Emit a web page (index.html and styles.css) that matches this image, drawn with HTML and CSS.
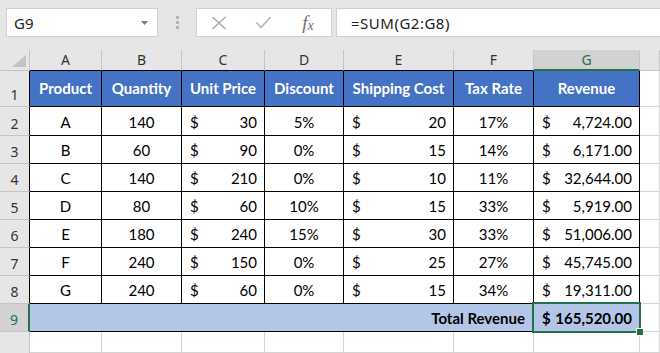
FILE: index.html
```html
<!DOCTYPE html>
<html>
<head>
<meta charset="utf-8">
<link rel="stylesheet" href="styles.css">
</head>
<body>
<div class="toolbar">
  <div class="namebox"><span>G9</span><svg class="dd" width="7" height="4" viewBox="0 0 7 4"><path d="M0 0H7L3.5 4Z" fill="#7a7a7a"/></svg></div>
  <div class="grip"><i></i><i></i><i></i></div>
  <div class="fxbox">
    <span class="btn"><svg width="16" height="14" viewBox="0 0 16 14"><path d="M1.5 1 L14.5 13 M14.5 1 L1.5 13" stroke="#a8a8a8" stroke-width="1.4" fill="none"/></svg></span>
    <span class="btn"><svg width="17" height="13" viewBox="0 0 17 13"><path d="M1.5 6.5 L6 11.5 L15.5 1" stroke="#b8b8b8" stroke-width="1.8" fill="none"/></svg></span>
    <span class="btn fx">f<span class="fxx">x</span></span>
  </div>
  <div class="formula">=SUM(G2:G8)</div>
</div>
<div class="sheet">
  <div class="corner"><svg width="14" height="12" viewBox="0 0 14 12"><path d="M14 0V12H0Z" fill="#c3c3c3"/></svg></div>
  <div class="ch">A</div><div class="ch">B</div><div class="ch">C</div><div class="ch">D</div><div class="ch">E</div><div class="ch">F</div><div class="ch sel">G</div><div class="ch ext"></div>

  <div class="rh">1</div>
  <div class="c hd">Product</div><div class="c hd">Quantity</div><div class="c hd">Unit Price</div><div class="c hd">Discount</div><div class="c hd">Shipping Cost</div><div class="c hd">Tax Rate</div><div class="c hd">Revenue</div><div class="g"></div>

  <div class="rh">2</div>
  <div class="c ctr">A</div><div class="c ctr">140</div><div class="c cur"><span>$</span><span>30</span></div><div class="c ctr">5%</div><div class="c cur"><span>$</span><span>20</span></div><div class="c ctr">17%</div><div class="c cur"><span>$</span><span>4,724.00</span></div><div class="g"></div>

  <div class="rh">3</div>
  <div class="c ctr">B</div><div class="c ctr">60</div><div class="c cur"><span>$</span><span>90</span></div><div class="c ctr">0%</div><div class="c cur"><span>$</span><span>15</span></div><div class="c ctr">14%</div><div class="c cur"><span>$</span><span>6,171.00</span></div><div class="g"></div>

  <div class="rh">4</div>
  <div class="c ctr">C</div><div class="c ctr">140</div><div class="c cur"><span>$</span><span>210</span></div><div class="c ctr">0%</div><div class="c cur"><span>$</span><span>10</span></div><div class="c ctr">11%</div><div class="c cur"><span>$</span><span>32,644.00</span></div><div class="g"></div>

  <div class="rh">5</div>
  <div class="c ctr">D</div><div class="c ctr">80</div><div class="c cur"><span>$</span><span>60</span></div><div class="c ctr">10%</div><div class="c cur"><span>$</span><span>15</span></div><div class="c ctr">33%</div><div class="c cur"><span>$</span><span>5,919.00</span></div><div class="g"></div>

  <div class="rh">6</div>
  <div class="c ctr">E</div><div class="c ctr">180</div><div class="c cur"><span>$</span><span>240</span></div><div class="c ctr">15%</div><div class="c cur"><span>$</span><span>30</span></div><div class="c ctr">33%</div><div class="c cur"><span>$</span><span>51,006.00</span></div><div class="g"></div>

  <div class="rh">7</div>
  <div class="c ctr">F</div><div class="c ctr">240</div><div class="c cur"><span>$</span><span>150</span></div><div class="c ctr">0%</div><div class="c cur"><span>$</span><span>25</span></div><div class="c ctr">27%</div><div class="c cur"><span>$</span><span>45,745.00</span></div><div class="g"></div>

  <div class="rh">8</div>
  <div class="c ctr">G</div><div class="c ctr">240</div><div class="c cur"><span>$</span><span>60</span></div><div class="c ctr">0%</div><div class="c cur"><span>$</span><span>15</span></div><div class="c ctr">34%</div><div class="c cur"><span>$</span><span>19,311.00</span></div><div class="g"></div>

  <div class="rh rsel">9</div>
  <div class="c tot">Total Revenue</div><div class="c cur bold active"><span>$</span><span>165,520.00</span><i class="handle"></i></div><div class="g"></div>

  <div class="rh last"></div>
  <div class="g"></div><div class="g"></div><div class="g"></div><div class="g"></div><div class="g"></div><div class="g"></div><div class="g"></div><div class="g"></div>
</div>
</body>
</html>
```
FILE: styles.css
```css
html, body {
  margin: 0;
  padding: 0;
}
body {
  width: 660px;
  height: 353px;
  overflow: hidden;
  background: #e6e6e6;
  font-family: Lato, "Noto Sans", sans-serif;
}
.toolbar {
  height: 50px;
  box-sizing: border-box;
  padding: 8px 0 0 6px;
  display: flex;
  align-items: flex-start;
}
.namebox {
  width: 152px;
  height: 29px;
  box-sizing: border-box;
  background: #fff;
  border: 1px solid #d0d0d0;
  display: flex;
  align-items: center;
  justify-content: space-between;
  padding: 0 9px 0 7px;
  font-family: "Noto Sans", sans-serif;
  font-size: 15px;
  color: #222;
}
.grip {
  width: 38px;
  height: 29px;
  display: flex;
  flex-direction: column;
  align-items: center;
  justify-content: center;
  gap: 2px;
}
.grip i {
  display: block;
  width: 3px;
  height: 3px;
  background: #b4b4b4;
}
.fxbox {
  width: 136px;
  height: 29px;
  box-sizing: border-box;
  background: #fff;
  border: 1px solid #d0d0d0;
  display: grid;
  grid-template-columns: 44px 44px 46px;
  align-items: center;
  justify-items: center;
}
.btn {
  display: flex;
  align-items: center;
  justify-content: center;
}
.fx {
  font-family: "Liberation Serif", serif;
  font-style: italic;
  font-size: 19px;
  color: #707070;
  line-height: 1;
}
.fxx {
  font-size: 14px;
  position: relative;
  top: 3px;
}
.formula {
  flex: 1;
  height: 29px;
  box-sizing: border-box;
  margin-left: 4px;
  background: #fff;
  border: 1px solid #d0d0d0;
  border-right: none;
  display: flex;
  align-items: center;
  padding-left: 14px;
  font-family: "Noto Sans", sans-serif;
  font-size: 15px;
  letter-spacing: 0.5px;
  color: #222;
}
.sheet {
  display: grid;
  grid-template-columns: 30px 72px 80px 83px 79px 110px 80px 106px 1fr;
  grid-template-rows: 21px 36px 29px repeat(6, 28px) 28px 1fr;
  height: 303px;
  background: #fff;
}
.sheet > div {
  box-sizing: border-box;
  min-width: 0;
}
.corner {
  background: #e6e6e6;
  border-right: 1px solid #c4c4c4;
  border-bottom: 1px solid #c4c4c4;
  display: flex;
  align-items: flex-end;
  justify-content: flex-end;
  padding: 0 3px 3px 0;
}
.ch {
  background: #e6e6e6;
  border-right: 1px solid #c4c4c4;
  border-bottom: 1px solid #000;
  display: flex;
  align-items: center;
  justify-content: center;
  font-family: "Noto Sans", sans-serif;
  font-size: 14px;
  color: #333;
  padding-bottom: 1px;
}
.ch.sel {
  background: #d2d2d2;
  color: #217346;
  border-bottom: 2px solid #217346;
  padding-bottom: 0;
}
.ch.ext {
  border-bottom-color: #c4c4c4;
}
.rh {
  background: #e6e6e6;
  border-right: 1px solid #000;
  border-bottom: 1px solid #c4c4c4;
  display: flex;
  align-items: flex-end;
  justify-content: center;
  padding-bottom: 2px;
  font-family: "Noto Sans", sans-serif;
  font-size: 14px;
  line-height: 18px;
  color: #333;
}
.rh.rsel {
  background: #d2d2d2;
  color: #217346;
  border-right: 2px solid #217346;
}
.rh.last {
  border-right-color: #c4c4c4;
  border-bottom: none;
}
.c {
  border-right: 1px solid #000;
  border-bottom: 1px solid #000;
  display: flex;
  align-items: flex-end;
  font-size: 15px;
  line-height: 17px;
  padding: 0 7px 4px 7px;
  color: #000;
  white-space: nowrap;
}
.ctr {
  justify-content: center;
}
.cur {
  justify-content: space-between;
  padding-left: 8px;
}
.hd {
  background: #4472c4;
  color: #fff;
  font-weight: 700;
  justify-content: center;
  align-items: center;
  padding: 0 2px;
}
.tot {
  grid-column: 2 / 8;
  background: #b4c6e7;
  border-right: none;
  font-weight: 700;
  justify-content: flex-end;
  padding-right: 9px;
}
.bold {
  font-weight: 700;
}
.active {
  background: #b4c6e7;
  position: relative;
}
.active::after {
  content: "";
  position: absolute;
  left: -2px;
  top: -2px;
  right: -2px;
  bottom: -2px;
  border: 2px solid #217346;
}
.handle {
  position: absolute;
  right: -5px;
  bottom: -5px;
  width: 6px;
  height: 6px;
  background: #217346;
  border: 1px solid #fff;
  z-index: 2;
}
.g {
  border-right: 1px solid #d4d4d4;
  border-bottom: 1px solid #d4d4d4;
}
```
